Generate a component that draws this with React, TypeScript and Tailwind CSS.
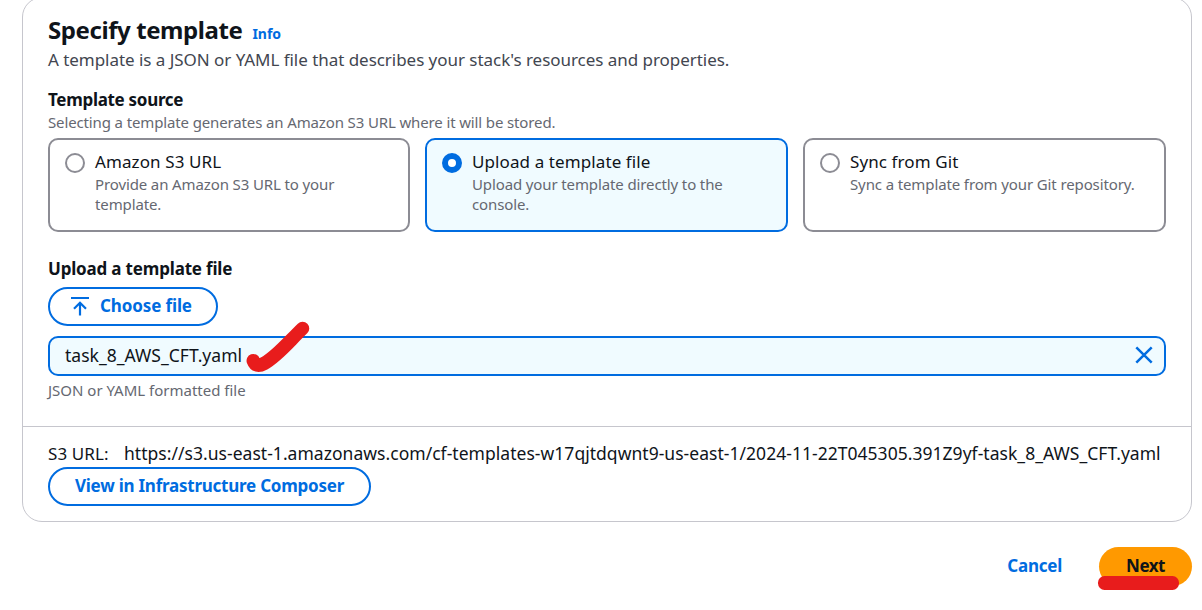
import type { ReactNode } from "react";

function Option({ title, children, selected }: { title: ReactNode; children: ReactNode; selected?: boolean }) {
  return (
    <label
      className={
        selected
          ? "flex h-[94px] gap-[10px] rounded-[10px] border-2 border-[#006ce0] bg-[#f0fbff] pt-[9px] pl-[15px]"
          : "flex h-[94px] gap-[10px] rounded-[10px] border-2 border-[#8c8c94] bg-white pt-[9px] pl-[15px]"
      }
    >
      <span
        className={
          selected
            ? "mt-[4px] size-5 shrink-0 rounded-full border-[6px] border-[#006ce0] bg-white"
            : "mt-[4px] size-5 shrink-0 rounded-full border-2 border-[#8c8c94] bg-white"
        }
      />
      <div>
        <div className="text-[17px] leading-[25px] tracking-[0.1px]">{title}</div>
        <div className="text-[15px] leading-5 tracking-[-0.12px] text-[#656871]">{children}</div>
      </div>
    </label>
  );
}

export default function App() {
  return (
    <div className="h-[610px] overflow-hidden bg-white pr-[10px] pl-[22px] font-['Noto_Sans',sans-serif] whitespace-nowrap text-[#0f141a]">
      <section className="-mt-[3px] h-[525px] rounded-[20px] border border-[#c6c6cd]">
        <div className="h-[429px] border-b border-[#c6c6cd] px-[25px] pt-4">
          <div className="flex h-[33px] items-baseline">
            <h1 className="text-[24px] leading-8 font-bold tracking-[-0.42px]">Specify template</h1>
            <a className="ml-[10px] text-[14px] font-bold text-[#006ce0]">Info</a>
          </div>
          <p className="text-[17px] leading-[25px] tracking-[-0.04px] text-[#424650]">
            A template is a JSON or YAML file that describes your stack's resources and properties.
          </p>
          <h2 className="mt-[15px] text-[17px] leading-[25px] font-bold tracking-[-0.3px]">Template source</h2>
          <p className="text-[15px] leading-5 tracking-[-0.132px] text-[#656871]">
            Selecting a template generates an Amazon S3 URL where it will be stored.
          </p>
          <div className="mt-[6px] grid grid-cols-[362px_363px_363px] gap-[15px]">
            <Option title="Amazon S3 URL">
              Provide an Amazon S3 URL to your
              <br />
              template.
            </Option>
            <Option selected title="Upload a template file">
              Upload your template directly to the
              <br />
              console.
            </Option>
            <Option title="Sync from Git">Sync a template from your Git repository.</Option>
          </div>
          <h2 className="mt-6 text-[17px] leading-[25px] font-bold tracking-[-0.18px]">Upload a template file</h2>
          <button className="mt-[6px] flex h-[39px] w-[170px] items-center rounded-full border-2 border-[#006ce0] pl-5 text-[17px] font-bold tracking-[-0.12px] text-[#006ce0]">
            <svg className="mb-px" width="20" height="20" viewBox="0 0 20 20" fill="none" stroke="currentColor" strokeWidth="2.2">
              <path d="M1 2h18M10 19.5V7M4 12.8l6-6 6 6" />
            </svg>
            <span className="ml-[10px] pb-[2px]">Choose file</span>
          </button>
          <div className="relative mt-[10px] flex h-10 items-center justify-between rounded-[10px] border-2 border-[#006ce0] bg-[#f0fbff] pr-[10px] pl-[15px] text-[17.5px] tracking-[0.02px]">
            <span className="pb-[2px]">task_8_AWS_CFT.yaml</span>
            <svg className="mb-[2px]" width="20" height="20" viewBox="0 0 20 20" fill="none" stroke="#006ce0" strokeWidth="2.5">
              <path d="M2.3 2.3l15.4 15.4M17.7 2.3L2.3 17.7" />
            </svg>
            <svg className="absolute -top-[23px] left-[190px]" width="80" height="65" viewBox="0 0 80 65" fill="none" stroke="#e81c1c" strokeWidth="13.5" strokeLinecap="round" strokeLinejoin="round">
              <path d="M13.3 45.7C15 50.5 18.5 51.5 24 48.5C37 41.5 49 26.5 62.5 13.5" />
            </svg>
          </div>
          <p className="mt-1 text-[15px] leading-5 text-[#656871]">JSON or YAML formatted file</p>
        </div>
        <div className="px-[25px] pt-[14px]">
          <div className="flex leading-[25px]">
            <span className="w-[76px] text-[17px] tracking-[0.1px]">S3 URL:</span>
            <span className="text-[17.5px] tracking-[0.032px]">
              https://s3.us-east-1.amazonaws.com/cf-templates-w17qjtdqwnt9-us-east-1/2024-11-22T045305.391Z9yf-task_8_AWS_CFT.yaml
            </span>
          </div>
          <button className="mt-px flex h-[39px] w-[323px] items-center justify-center rounded-full border-2 border-[#006ce0] pb-px text-[17px] font-bold tracking-[-0.24px] text-[#006ce0]">
            View in Infrastructure Composer
          </button>
        </div>
      </section>
      <div className="mt-[25px] flex justify-end text-[17px] font-bold">
        <button className="mr-[37px] pb-px tracking-[-0.25px] text-[#006ce0]">Cancel</button>
        <button className="relative flex h-[39px] w-[93px] items-center justify-center rounded-full bg-[#ff9900] pb-px tracking-[-0.5px]">
          Next
          <span className="absolute top-[29px] -left-px h-[14px] w-[81px] rounded-[6.5px] bg-[#e81c1c]" />
        </button>
      </div>
    </div>
  );
}
